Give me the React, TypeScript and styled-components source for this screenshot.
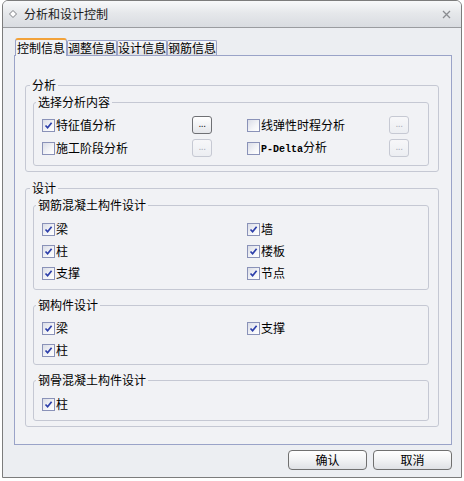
import React from 'react';
import styled, { createGlobalStyle } from 'styled-components';

const Global = createGlobalStyle`
  html, body { margin: 0; padding: 0; background: #ffffff; }
  body {
    font-family: "Noto Sans CJK SC", "Noto Sans", sans-serif;
    font-size: 12px;
    color: #000;
  }
  * { box-sizing: border-box; }
`;

const Window = styled.div`
  margin-left: 2px;
  width: 460px;
  height: 478px;
  border: 1px solid #7c7c7c;
  border-radius: 6px 6px 0 0;
  background: #eceef2;
  display: flex;
  flex-direction: column;
  overflow: hidden;
`;

const TitleBar = styled.div`
  height: 27px;
  flex: none;
  display: flex;
  align-items: center;
  padding: 0 10px 0 6px;
  border-bottom: 1px solid #9a9ca0;
  background: linear-gradient(to bottom, #f8f9fa 0%, #e6e8eb 45%, #d9dce1 100%);
`;

const TitleText = styled.span`
  flex: 1;
  margin-left: 7px;
  font-size: 12px;
  line-height: 14px;
  color: #1a1a1a;
`;

const Body = styled.div`
  flex: 1;
  display: flex;
  flex-direction: column;
  padding: 10px 9px 7px 11px;
`;

const TabBar = styled.div`
  display: flex;
  align-items: flex-end;
  margin-left: 1px;
`;

const Tab = styled.div<{ $active?: boolean }>`
  line-height: 14px;
  font-size: 12px;
  white-space: nowrap;
  border: 1px solid #9aa3c8;
  border-bottom: none;
  ${(p) =>
    p.$active
      ? `
    position: relative;
    z-index: 1;
    margin-bottom: -1px;
    padding: 1px 1px 1px 1px;
    border-top: 2px solid #f2a23a;
    border-radius: 3px 3px 0 0;
    background: #f1f2f5;
  `
      : `
    padding: 0 0 0 0;
    border-radius: 2px 2px 0 0;
    background: linear-gradient(to bottom, #f7f7f9, #dfe1e6);
  `}
`;

const Panel = styled.div`
  height: 390px;
  flex: none;
  border: 1px solid #9aa3c8;
  background: #f1f2f5;
  padding: 22px 12px 0 10px;
  display: flex;
  flex-direction: column;
  gap: 9px;
`;

const OuterGroup = styled.fieldset`
  margin: 0;
  min-width: 0;
  border: 1px solid #c5c8d3;
  border-radius: 3px;
  padding: 3px 9px 5px 7px;
  display: flex;
  flex-direction: column;
  gap: 8px;
`;

const OuterLegend = styled.legend`
  margin-left: -3px;
  padding: 0 2px;
  line-height: 14px;
  font-size: 12px;
`;

const InnerGroup = styled.fieldset<{ $pt: number; $pb: number }>`
  margin: 0;
  min-width: 0;
  border: 1px solid #c5c8d3;
  border-radius: 3px;
  padding: ${(p) => p.$pt}px 16px ${(p) => p.$pb}px 8px;
`;

const InnerLegend = styled.legend`
  margin-left: -6px;
  padding: 0 2px;
  line-height: 14px;
  font-size: 12px;
`;

const AnalysisGrid = styled.div`
  display: grid;
  grid-template-columns: 170px 162px;
  column-gap: 35px;
  row-gap: 5px;
`;

const DesignGrid = styled.div`
  display: grid;
  grid-template-columns: 205px 1fr;
  row-gap: 4px;
`;

const Item = styled.div`
  height: 18px;
  display: flex;
  align-items: center;
`;

const Label = styled.span`
  margin-left: 1px;
  line-height: 14px;
  font-size: 12px;
  white-space: nowrap;
`;

const Latin = styled.span`
  font-family: "Liberation Mono", "DejaVu Sans Mono", monospace;
  font-size: 10px;
  font-weight: 600;
`;

const Box = styled.span`
  width: 13px;
  height: 13px;
  flex: none;
  border: 1px solid #8a92b8;
  background: linear-gradient(135deg, #dadde7 0%, #f4f5f8 60%, #ffffff 100%);
  display: flex;
  align-items: center;
  justify-content: center;
`;

const DotsButton = styled.span<{ $disabled?: boolean }>`
  margin-left: auto;
  width: 20px;
  height: 18px;
  border-radius: 3px;
  border: 1px solid ${(p) => (p.$disabled ? '#c6c9d3' : '#6f7074')};
  background: ${(p) =>
    p.$disabled
      ? 'linear-gradient(to bottom, #f7f7f9, #eceef2)'
      : 'linear-gradient(to bottom, #ffffff, #e4e6ea)'};
  color: ${(p) => (p.$disabled ? '#a9adb8' : '#111')};
  font-family: "Liberation Sans", Arial, sans-serif;
  font-size: 10px;
  line-height: 14px;
  text-align: center;
  letter-spacing: -0.5px;
`;

const ButtonRow = styled.div`
  margin-top: 5px;
  display: flex;
  justify-content: flex-end;
  gap: 6px;
`;

const Button = styled.button`
  width: 79px;
  height: 20px;
  padding: 0;
  border: 1px solid #707070;
  border-radius: 4px;
  background: linear-gradient(to bottom, #ffffff 0%, #f1f2f4 50%, #dfe1e5 100%);
  font-family: "Noto Sans CJK SC", "Noto Sans", sans-serif;
  font-size: 12px;
  line-height: 14px;
  color: #000;
`;

const Check: React.FC<{ checked?: boolean }> = ({ checked }) => (
  <Box>
    {checked && (
      <svg width="9" height="9" viewBox="0 0 9 9">
        <path d="M1.5 4.5 L3.6 6.8 L7.6 1.8" fill="none" stroke="#2c3eaa" strokeWidth="1.7" />
      </svg>
    )}
  </Box>
);

const CheckItem: React.FC<{ checked?: boolean; children: React.ReactNode; dots?: 'on' | 'off' }> = ({
  checked,
  children,
  dots,
}) => (
  <Item>
    <Check checked={checked} />
    <Label>{children}</Label>
    {dots && <DotsButton $disabled={dots === 'off'}>...</DotsButton>}
  </Item>
);

const WinIcon = () => (
  <svg width="8" height="8" viewBox="0 0 8 8">
    <path d="M4 0.5 L7.5 4 L4 7.5 L0.5 4 Z" fill="#ffffff" stroke="#7a7c80" strokeWidth="1" />
  </svg>
);

const CloseIcon = () => (
  <svg width="9" height="9" viewBox="0 0 9 9">
    <path d="M1 1 L8 8 M8 1 L1 8" stroke="#8a8c90" strokeWidth="1.3" />
  </svg>
);

export default function App() {
  return (
    <>
      <Global />
      <Window>
        <TitleBar>
          <WinIcon />
          <TitleText>分析和设计控制</TitleText>
          <CloseIcon />
        </TitleBar>
        <Body>
          <TabBar>
            <Tab $active>控制信息</Tab>
            <Tab>调整信息</Tab>
            <Tab>设计信息</Tab>
            <Tab>钢筋信息</Tab>
          </TabBar>
          <Panel>
            <OuterGroup>
              <OuterLegend>分析</OuterLegend>
              <InnerGroup $pt={7} $pb={8}>
                <InnerLegend>选择分析内容</InnerLegend>
                <AnalysisGrid>
                  <CheckItem checked dots="on">特征值分析</CheckItem>
                  <CheckItem dots="off">线弹性时程分析</CheckItem>
                  <CheckItem dots="off">施工阶段分析</CheckItem>
                  <CheckItem dots="off">
                    <Latin>P-Delta</Latin>分析
                  </CheckItem>
                </AnalysisGrid>
              </InnerGroup>
            </OuterGroup>
            <OuterGroup>
              <OuterLegend>设计</OuterLegend>
              <InnerGroup $pt={8} $pb={7}>
                <InnerLegend>钢筋混凝土构件设计</InnerLegend>
                <DesignGrid>
                  <CheckItem checked>梁</CheckItem>
                  <CheckItem checked>墙</CheckItem>
                  <CheckItem checked>柱</CheckItem>
                  <CheckItem checked>楼板</CheckItem>
                  <CheckItem checked>支撑</CheckItem>
                  <CheckItem checked>节点</CheckItem>
                </DesignGrid>
              </InnerGroup>
              <InnerGroup $pt={7} $pb={5}>
                <InnerLegend>钢构件设计</InnerLegend>
                <DesignGrid>
                  <CheckItem checked>梁</CheckItem>
                  <CheckItem checked>支撑</CheckItem>
                  <CheckItem checked>柱</CheckItem>
                </DesignGrid>
              </InnerGroup>
              <InnerGroup $pt={8} $pb={7}>
                <InnerLegend>钢骨混凝土构件设计</InnerLegend>
                <DesignGrid>
                  <CheckItem checked>柱</CheckItem>
                </DesignGrid>
              </InnerGroup>
            </OuterGroup>
          </Panel>
          <ButtonRow>
            <Button>确认</Button>
            <Button>取消</Button>
          </ButtonRow>
        </Body>
      </Window>
    </>
  );
}
